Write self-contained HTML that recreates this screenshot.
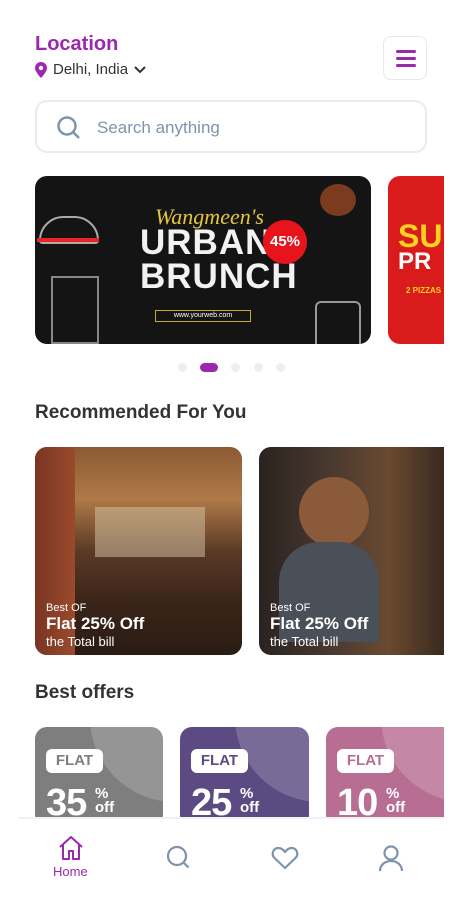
<!DOCTYPE html>
<html><head><meta charset="utf-8"><style>
*{margin:0;padding:0;box-sizing:border-box}
body{width:462px;height:906px;background:#fff;font-family:"Liberation Sans",sans-serif;position:relative;overflow:hidden}
.abs{position:absolute}
.loc{left:35px;top:33px;font-size:20px;font-weight:bold;color:#9c27b0}
.city{left:35px;top:61px;font-size:15px;color:#333;display:flex;align-items:center;gap:6px}
.menu{left:383px;top:36px;width:44px;height:44px;border:1px solid #e3e8ef;border-radius:8px}
.menu i{position:absolute;left:12px;width:20px;height:3px;background:#9c27b0;border-radius:2px}
.search{left:35px;top:100px;width:392px;height:53px;border:2px solid #e5ecf2;border-radius:12px}
.search span{position:absolute;left:60px;top:16px;font-size:17px;color:#7f93ae}
.banner{left:35px;top:176px;width:336px;height:168px;border-radius:12px;background:#141414;overflow:hidden}
.banner2{left:388px;top:176px;width:56px;height:168px;border-radius:12px 0 0 12px;background:#d91b1b;overflow:hidden}
.dot{top:363px;width:9px;height:9px;border-radius:5px;background:#eee}
h2{position:absolute;left:35px;font-size:19px;font-weight:bold;color:#333}
.card{top:447px;height:208px;border-radius:12px;overflow:hidden}
.card .t{position:absolute;left:11px;bottom:6px;color:#fff}
.off{top:727px;height:100px;border-radius:12px;overflow:hidden}
.off .c{position:absolute;left:55px;top:-95px;width:170px;height:170px;border-radius:50%;background:rgba(255,255,255,.18)}
.off .f{position:absolute;left:11px;top:22px;width:57px;height:24px;background:#fff;border-radius:6px;font-weight:bold;font-size:15px;text-align:center;line-height:24px}
.off .n{position:absolute;left:11px;top:55px;color:#fff;font-weight:bold;font-size:38px;letter-spacing:-1px}
.off .p{position:absolute;left:60px;top:60px;color:#fff;font-weight:bold;font-size:15px;line-height:14px}
.nav{left:18px;top:817px;width:426px;height:89px;background:#fff;border-top:2px solid #eef2f7}
</style></head><body>
<div class="abs loc">Location</div>
<div class="abs city"><svg width="12" height="16" viewBox="0 0 12 16"><path d="M6 0C2.7 0 0 2.6 0 5.9 0 10 6 16 6 16s6-6 6-10.1C12 2.6 9.3 0 6 0z" fill="#9c27b0"/><circle cx="6" cy="6" r="2.2" fill="#fff"/></svg>Delhi, India <svg width="12" height="8" viewBox="0 0 12 8"><path d="M1 1l5 5 5-5" stroke="#333" stroke-width="2" fill="none"/></svg></div>
<div class="abs menu"><i style="top:13px"></i><i style="top:20px"></i><i style="top:27px"></i></div>
<div class="abs search"><svg style="position:absolute;left:19px;top:13px" width="26" height="26" viewBox="0 0 26 26"><circle cx="11" cy="11" r="8.5" stroke="#7f93ae" stroke-width="2.4" fill="none"/><path d="M17 17l6 6" stroke="#7f93ae" stroke-width="2.4"/></svg><span>Search anything</span></div>
<div class="abs banner">
<div class="abs" style="left:120px;top:28px;color:#e6c53a;font-family:'Liberation Serif',serif;font-style:italic;font-size:22px">Wangmeen's</div>
<div class="abs" style="left:105px;top:50px;color:#f2f2f2;font-weight:bold;font-size:35px;line-height:34px;letter-spacing:1px">URBAN<br>BRUNCH</div>
<div class="abs" style="left:228px;top:44px;width:44px;height:44px;border-radius:50%;background:#e8141c;color:#fff;font-weight:bold;font-size:15px;text-align:center;line-height:44px">45%</div>
<div class="abs" style="left:120px;top:134px;width:96px;height:12px;border:1px solid #c9a832;color:#fff;font-size:7px;text-align:center;line-height:10px">www.yourweb.com</div>
<div class="abs" style="left:4px;top:40px;width:60px;height:28px;border:2px solid #aaa;border-radius:28px 28px 4px 4px"></div>
<div class="abs" style="left:2px;top:62px;width:62px;height:4px;background:#e22"></div>
<div class="abs" style="left:16px;top:100px;width:48px;height:68px;border:2px solid #888"></div>
<div class="abs" style="left:285px;top:8px;width:36px;height:32px;border-radius:50%;background:#7a3b1e"></div>
<div class="abs" style="left:280px;top:125px;width:46px;height:50px;border:2px solid #999;border-radius:6px"></div>
</div>
<div class="abs banner2"><div class="abs" style="left:10px;top:42px;color:#ffd21f;font-weight:bold;font-size:32px">SU</div><div class="abs" style="left:10px;top:72px;color:#fff;font-weight:bold;font-size:24px">PR</div><div class="abs" style="left:18px;top:110px;color:#ffd21f;font-weight:bold;font-size:8px">2 PIZZAS</div></div>
<div class="abs dot" style="left:178px"></div>
<div class="abs dot" style="left:200px;width:18px;background:#9c27b0"></div>
<div class="abs dot" style="left:231px"></div>
<div class="abs dot" style="left:254px"></div>
<div class="abs dot" style="left:276px"></div>
<h2 style="top:402px">Recommended For You</h2>
<div class="abs card" style="left:35px;width:207px;background:linear-gradient(180deg,#8a5a32 0%,#b07a48 25%,#5a3a26 50%,#3a2418 75%,#2a1c14 100%)">
<div class="abs" style="left:0;top:0;width:40px;height:208px;background:linear-gradient(90deg,#7a3522,#9a4a2c)"></div>
<div class="abs" style="left:60px;top:60px;width:110px;height:50px;background:#d8c8a8;opacity:.5"></div>
<div class="t"><div style="font-size:11px">Best OF</div><div style="font-size:17px;font-weight:bold">Flat 25% Off</div><div style="font-size:13px">the Total bill</div></div></div>
<div class="abs card" style="left:259px;width:185px;border-radius:12px 0 0 12px;background:linear-gradient(90deg,#2a2320 0%,#4a3a30 40%,#6a4a30 70%,#3a2a20 100%)">
<div class="abs" style="left:40px;top:30px;width:70px;height:70px;border-radius:50%;background:#8a5a3a"></div>
<div class="abs" style="left:20px;top:95px;width:100px;height:100px;border-radius:40px 40px 0 0;background:#4a5058"></div>
<div class="t"><div style="font-size:11px">Best OF</div><div style="font-size:17px;font-weight:bold">Flat 25% Off</div><div style="font-size:13px">the Total bill</div></div></div>
<h2 style="top:682px">Best offers</h2>
<div class="abs off" style="left:35px;width:128px;background:#7e7e7e"><div class="c"></div><div class="f" style="color:#7e7e7e">FLAT</div><div class="n">35</div><div class="p">%<br>off</div></div>
<div class="abs off" style="left:180px;width:129px;background:#5b4b82"><div class="c"></div><div class="f" style="color:#5b4b82">FLAT</div><div class="n">25</div><div class="p">%<br>off</div></div>
<div class="abs off" style="left:326px;width:118px;border-radius:12px 0 0 12px;background:#b86d93"><div class="c"></div><div class="f" style="color:#b86d93">FLAT</div><div class="n">10</div><div class="p">%<br>off</div></div>
<div class="abs nav">
<svg class="abs" style="left:39px;top:15px" width="28" height="28" viewBox="0 0 28 28"><path d="M3 13L14 3l11 10M6 11v14h6v-8h4v8h6V11" stroke="#9c27b0" stroke-width="2" fill="none" stroke-linejoin="round"/></svg>
<div class="abs" style="left:35px;top:45px;font-size:13px;color:#9c27b0">Home</div>
<svg class="abs" style="left:148px;top:26px" width="26" height="26" viewBox="0 0 26 26"><circle cx="11" cy="11" r="9" stroke="#7f93ae" stroke-width="2.2" fill="none"/><path d="M17.5 17.5l5 5" stroke="#7f93ae" stroke-width="2.2"/></svg>
<svg class="abs" style="left:253px;top:27px" width="28" height="24" viewBox="0 0 28 24"><path d="M14 22L3.5 12C0 8.5 2 2 7.5 2c3 0 5 2 6.5 4 1.5-2 3.5-4 6.5-4C26 2 28 8.5 24.5 12z" stroke="#7f93ae" stroke-width="2.2" fill="none" stroke-linejoin="round"/></svg>
<svg class="abs" style="left:360px;top:25px" width="26" height="28" viewBox="0 0 26 28"><circle cx="13" cy="9" r="6.5" stroke="#7f93ae" stroke-width="2.2" fill="none"/><path d="M2 27c0-6 5-10 11-10s11 4 11 10" stroke="#7f93ae" stroke-width="2.2" fill="none"/></svg>
</div>
</body></html>
